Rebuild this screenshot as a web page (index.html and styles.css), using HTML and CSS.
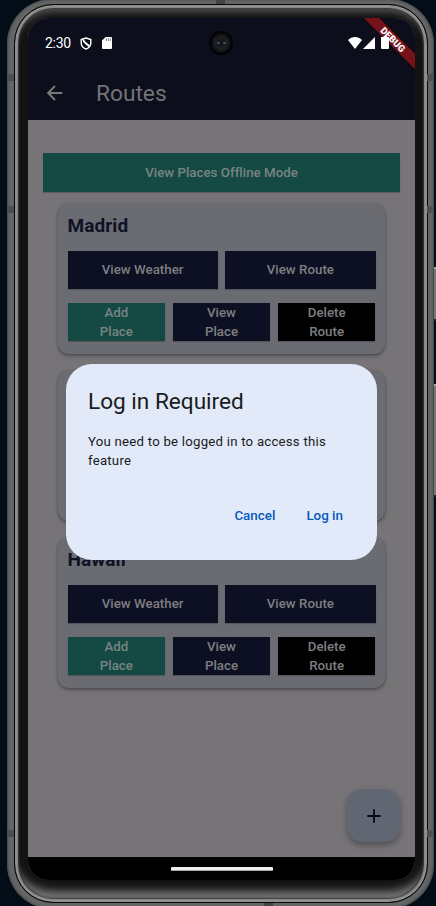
FILE: index.html
```html
<!DOCTYPE html>
<html lang="en">
<head>
<meta charset="utf-8">
<title>Routes</title>
<link rel="stylesheet" href="styles.css">
</head>
<body>
<div class="side-key key-power"></div>
<div class="side-key key-volume"></div>
<div class="phone">
  <i class="band band-top"></i><i class="band band-bottom"></i>
  <i class="seam seam-1"></i><i class="seam seam-2"></i><i class="seam seam-3"></i>
  <div class="bezel">
    <div class="screen">
      <header class="top">
        <div class="status">
          <span class="time">2:30</span>
          <svg class="shield" viewBox="0 0 12 13"><path d="M6 1 10.8 2.6V6c0 3-2 5-4.8 6.2C3.2 11 1.2 9 1.2 6V2.6Z" fill="none" stroke="#fff" stroke-width="1.4"/><path d="M3.2 2.5C3.5 6 7 6.5 9.5 9.5" fill="none" stroke="#fff" stroke-width="1.9"/></svg>
          <svg class="sd" viewBox="0 0 10 12"><path d="M3.6 0H9a1 1 0 0 1 1 1v10a1 1 0 0 1-1 1H1a1 1 0 0 1-1-1V3.6Z" fill="#fff"/><path d="M4.3 1.2v2.7M6.3 1.2v2.7M8.3 1.2v2.7" stroke="#777985" stroke-width="1"/></svg>
          <span class="grow"></span>
          <svg class="wifi" viewBox="0 0 14 12"><path d="M0 3C4-.9 10-.9 14 3L7 12Z" fill="#fff"/></svg>
          <svg class="signal" viewBox="0 0 12 12"><path d="M12 0v12H0Z" fill="#fff"/></svg>
          <svg class="battery" viewBox="0 0 8 13"><path d="M2.5 0h3v1H8v11a1 1 0 0 1-1 1H1a1 1 0 0 1-1-1V1h2.5Z" fill="#fff"/></svg>
        </div>
        <div class="appbar">
          <svg class="back" viewBox="0 0 16 16"><path d="M15.3 8H1.5M8 1 1.2 8l6.8 7" fill="none" stroke="#78787b" stroke-width="1.9"/></svg>
          <h1>Routes</h1>
        </div>
        <div class="camera"><i></i><i></i></div>
        <div class="debug">DEBUG</div>
      </header>
      <main>
        <button class="btn teal offline">View Places Offline Mode</button>
        <section class="card">
          <h2>Madrid</h2>
          <div class="row two"><button class="btn">View Weather</button><button class="btn">View Route</button></div>
          <div class="row three"><button class="btn teal">Add<br>Place</button><button class="btn">View<br>Place</button><button class="btn black">Delete<br>Route</button></div>
        </section>
        <section class="card"></section>
        <section class="card">
          <h2>Hawaii</h2>
          <div class="row two"><button class="btn">View Weather</button><button class="btn">View Route</button></div>
          <div class="row three"><button class="btn teal">Add<br>Place</button><button class="btn">View<br>Place</button><button class="btn black">Delete<br>Route</button></div>
        </section>
        <button class="fab" aria-label="Add"><svg viewBox="0 0 14 14"><path d="M7 .3v13.4M.3 7h13.4" stroke="#020c21" stroke-width="1.9"/></svg></button>
      </main>
      <footer><i></i></footer>
      <div class="dialog" role="dialog">
        <h3>Log in Required</h3>
        <p>You need to be logged in to access this feature</p>
        <div class="actions"><button>Cancel</button><button>Log in</button></div>
      </div>
    </div>
  </div>
</div>
</body>
</html>
```
FILE: styles.css
```css
* { box-sizing: border-box; }
html { overflow: hidden; }
body {
  position: relative;
  margin: 0;
  width: 436px;
  height: 906px;
  overflow: hidden;
  background: #020d18;
  font-family: Roboto, sans-serif;
}
button { border: 0; padding: 0; font: inherit; background: none; }
h1, h2, h3, p { margin: 0; }
.side-key {
  position: absolute;
  right: 0;
  width: 3px;
  background: #777;
  border-top: 2px solid #aaa;
  border-bottom: 2px solid #222;
}
.key-power { top: 267px; height: 54px; }
.key-volume { top: 384px; height: 113px; }
.phone {
  position: relative;
  width: 427px;
  height: 910px;
  margin: -1px 0 0 7px;
  padding: 5px 6px 6px 7px;
  border-radius: 45px;
  background: #646565;
  box-shadow: inset 0 0 2px 1px #444546;
}
.bezel {
  width: 414px;
  height: 899px;
  border: 1px solid #070707;
  border-radius: 39px;
  padding: 13px;
  background: #131313;
  box-shadow: inset 0 0 1px 3px #8f8f8f, inset 0 0 2px 4px #303030, inset 0 -15px 9px -4px #777, inset 0 9px 7px -2px #555;
}
.seam { position: absolute; left: 0; width: 7px; height: 7px; background: #4e4f50; box-shadow: 420px 0 #4e4f50; }
.seam-1 { top: 75px; }
.seam-2 { top: 207px; }
.seam-3 { top: 831px; }
.band { position: absolute; width: 9px; height: 4px; background: #444; }
.band-top { left: 209px; top: 1px; }
.band-bottom { left: 257px; top: 904px; }
.screen {
  position: relative;
  display: flex;
  flex-direction: column;
  width: 387px;
  height: 862px;
  overflow: hidden;
  border-radius: 20px;
  background: #777477;
}
.top { position: relative; height: 102px; background: #0d0e1c; }
.status { position: relative; z-index: 2; display: flex; align-items: center; height: 50px; padding: 0 26px 0 17px; }
.time { font-size: 14px; letter-spacing: -.3px; color: #fff; width: 35px; }
.shield { width: 12px; height: 13px; }
.sd { width: 10px; height: 12px; margin-left: 10px; }
.grow { flex: 1; }
.wifi { width: 14px; height: 12px; margin-top: -1px; }
.signal { width: 12px; height: 12px; margin-left: 1px; margin-top: -1px; }
.battery { width: 8px; height: 13px; margin-left: 6px; margin-top: -1px; }
.appbar { display: flex; align-items: center; height: 50px; padding-left: 19px; }
.back { width: 16px; height: 16px; }
h1 { margin: 2px 0 0 33px; font-size: 22.7px; line-height: 30px; font-weight: 400; color: #747477; }
.camera {
  position: absolute;
  left: 181px;
  top: 13px;
  display: flex;
  justify-content: center;
  align-items: center;
  gap: 3px;
  width: 24px;
  height: 24px;
  border-radius: 50%;
  border: 2px solid #030305;
  background: radial-gradient(circle, #15181e 20%, #1e1f22 43%, #151619 55%, #0b0b0e 70%);
}
.camera i { width: 3px; height: 2px; background: #3a5268; border-radius: 1px; }
.debug {
  position: absolute;
  left: 319.7px;
  top: 16.3px;
  width: 90px;
  height: 11px;
  transform: rotate(45deg);
  background: #751319;
  box-shadow: 0 0 4px #0007;
  color: #fff;
  font-size: 9.5px;
  line-height: 11px;
  font-weight: 900;
  text-align: center;
}
main { position: relative; flex: 1; padding: 33px 15px 0; }
.btn {
  display: block;
  height: 37.6px;
  background: #0d1022;
  color: #7e7e81;
  font-size: 13.3px;
  line-height: 19px;
  font-weight: 500;
  letter-spacing: .01px;
  box-shadow: 0 1px 1px #0003;
}
.teal { background: #154944; color: #778582; }
.black { background: #010102; }
.offline { width: 357px; height: 38.5px; }
.card {
  width: 327px;
  height: 151px;
  margin: 11.5px 0 16px 15px;
  padding: 10px 9.5px;
  border-radius: 11px;
  background: #6a6c72;
  box-shadow: 0 1px 3px #0005, 0 3px 4px #0002;
}
.card + .card { margin-top: 0; }
h2 { height: 38px; font-size: 19px; line-height: 26px; font-weight: 700; letter-spacing: .1px; color: #101125; }
.row { display: grid; gap: 7.5px; }
.two { grid-template-columns: 1fr 1fr; }
.three { grid-template-columns: 1fr 1fr 1fr; margin-top: 14.8px; }
.fab {
  position: absolute;
  right: 15px;
  bottom: 15px;
  display: grid;
  place-items: center;
  width: 53px;
  height: 53px;
  border-radius: 15px;
  background: #616772;
  box-shadow: 0 3px 6px #0005;
}
.fab svg { width: 14px; height: 14px; }
footer { display: flex; justify-content: center; height: 23px; padding-top: 10px; background: #000; }
footer i { width: 102px; height: 4px; border-radius: 1px; background: #eee; border-bottom: 1px solid #aaa; }
.dialog {
  position: absolute;
  left: 38px;
  top: 346px;
  width: 311px;
  height: 196px;
  padding: 23px 22px 20px;
  border-radius: 26px;
  background: #e2e9f8;
  color: #191c20;
}
.dialog h3 { font-size: 22.6px; line-height: 30px; font-weight: 400; }
.dialog p { margin-top: 15px; font-size: 13.2px; line-height: 19px; letter-spacing: .24px; }
.actions { display: flex; justify-content: flex-end; gap: 31px; margin-top: 36px; padding-right: 12px; }
.actions button { color: #0759bd; font-size: 13.4px; line-height: 20px; font-weight: 500; }
```
